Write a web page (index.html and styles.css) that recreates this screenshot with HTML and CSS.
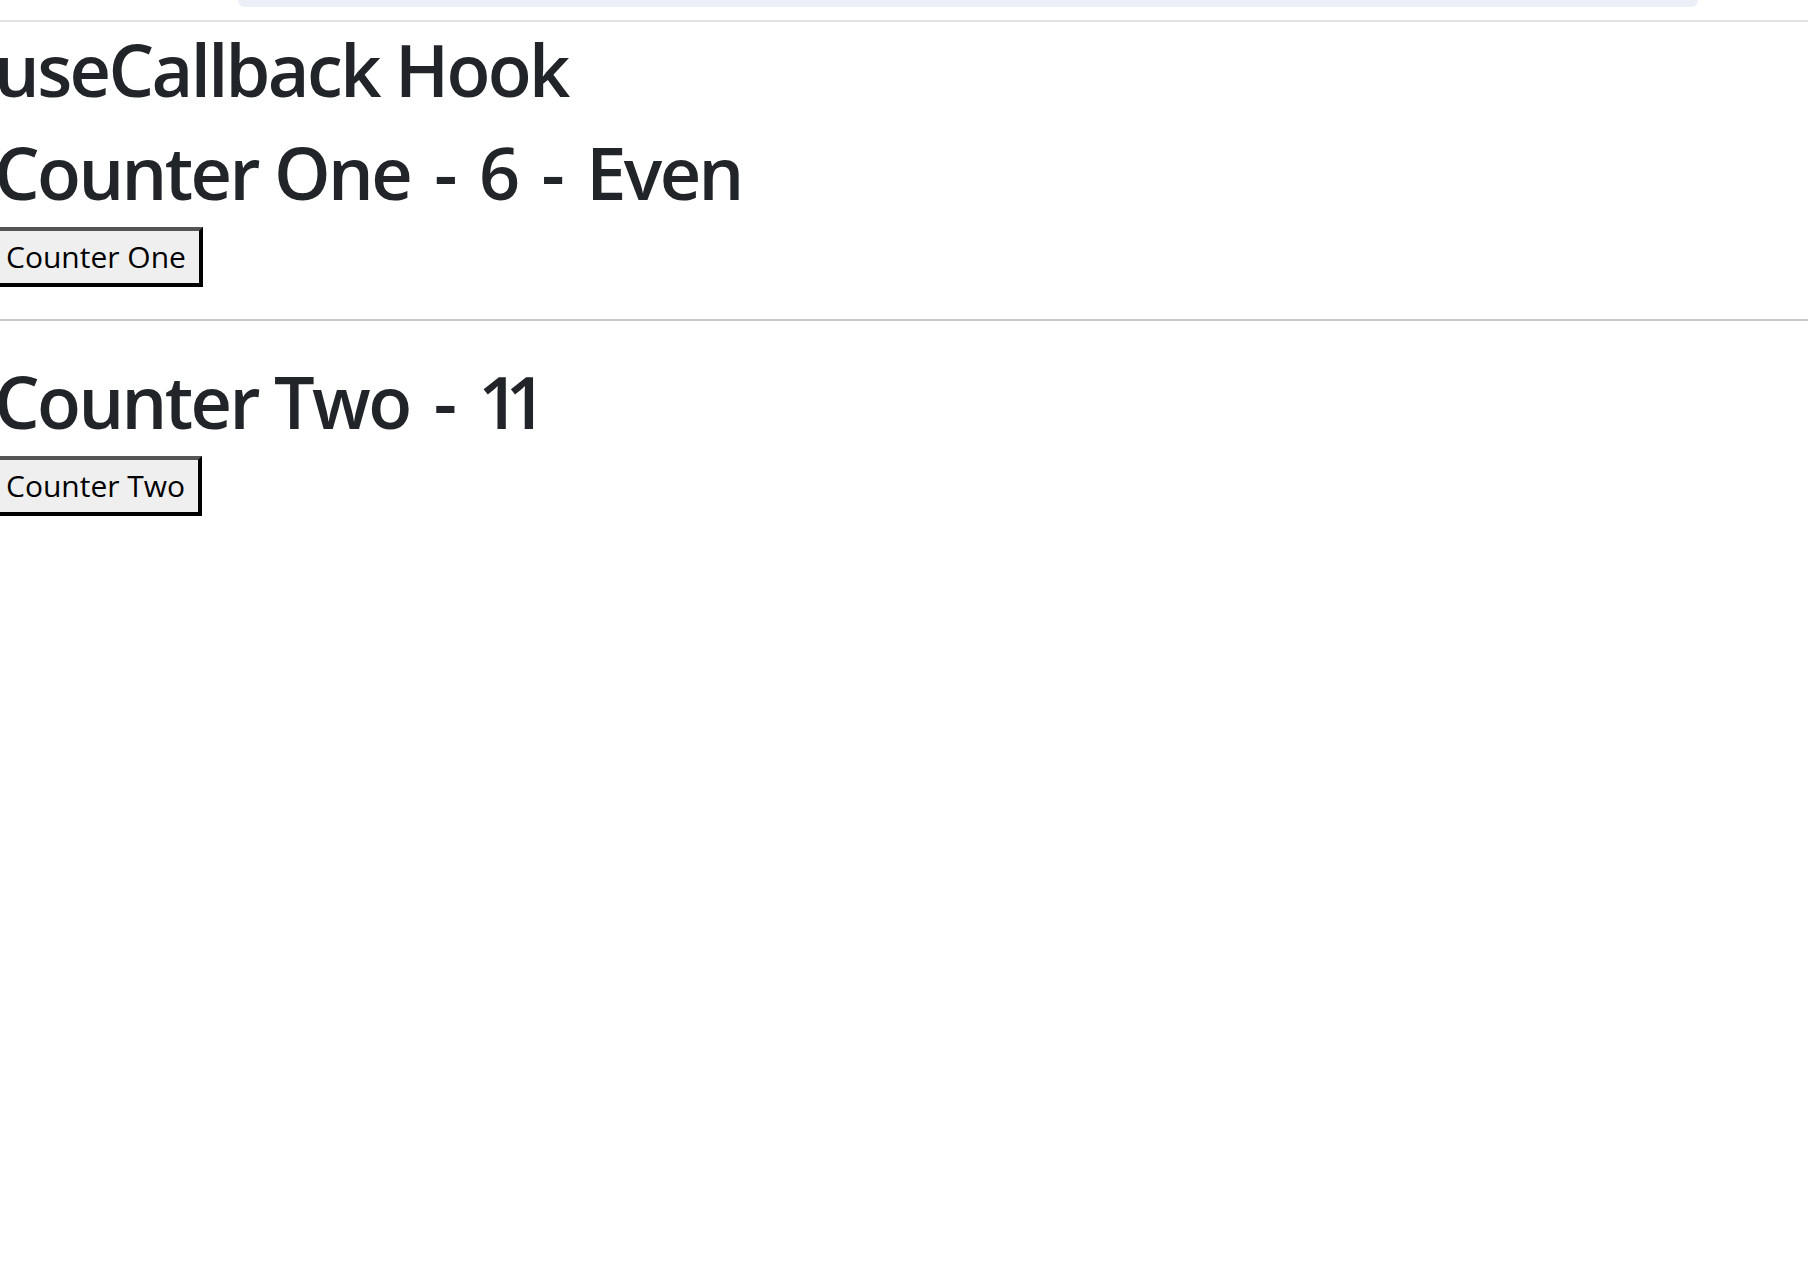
FILE: index.html
```html
<!DOCTYPE html>
<html lang="en">
<head>
<meta charset="utf-8">
<title>useCallback Hook</title>
<link rel="stylesheet" href="styles.css">
</head>
<body>
<div class="strip"><div class="strip-bar"></div></div>
<main class="page">
  <h1 class="title">useCallback Hook</h1>
  <section class="counter">
    <h2 class="heading">Counter One <span class="dash">-</span> 6 <span class="dash">-</span> Even</h2>
    <button class="btn">Counter One</button>
  </section>
  <hr class="rule">
  <section class="counter counter-two">
    <h2 class="heading">Counter Two <span class="dash">-</span> <span class="num">11</span></h2>
    <button class="btn">Counter Two</button>
  </section>
</main>
</body>
</html>
```
FILE: styles.css
```css
html, body {
  margin: 0;
  padding: 0;
  background: #ffffff;
  overflow: hidden;
}

body {
  font-family: "Open Sans", "Noto Sans", sans-serif;
  color: #212529;
}

.strip {
  height: 20px;
  border-bottom: 2px solid #e3e3e3;
}

.strip-bar {
  margin-left: 238px;
  width: 1460px;
  height: 7px;
  background: #ebeff8;
  border-radius: 0 0 18px 18px;
}

.page {
  margin-left: -13px;
  display: flex;
  flex-direction: column;
  align-items: flex-start;
}

.title,
.heading {
  font-family: "Open Sans", "Noto Sans", sans-serif;
  font-weight: 600;
  font-size: 72px;
  line-height: 86px;
  letter-spacing: -2.6px;
  color: #212529;
  margin: 0;
  padding-left: 7px;
  white-space: nowrap;
}

.dash {
  display: inline-block;
  margin: 0 8px;
}

.num {
  letter-spacing: -14px;
}

.title {
  margin-top: 4px;
}

.counter {
  display: flex;
  flex-direction: column;
  align-items: flex-start;
  margin-top: 17px;
}

.btn {
  margin-top: 12px;
  height: 60px;
  box-sizing: border-box;
  padding: 0 13px 0 15px;
  border: 4px solid;
  border-color: #555555 #000000 #000000 #555555;
  background: #efefef;
  color: #000000;
  font-family: "Open Sans", "Noto Sans", sans-serif;
  font-size: 30px;
  font-weight: 400;
  line-height: 52px;
  border-radius: 0;
}

.rule {
  align-self: stretch;
  margin: 32px 0 0 0;
  border: 0;
  height: 2px;
  background: #c8c8c8;
}

.counter-two {
  margin-top: 37px;
}
```
